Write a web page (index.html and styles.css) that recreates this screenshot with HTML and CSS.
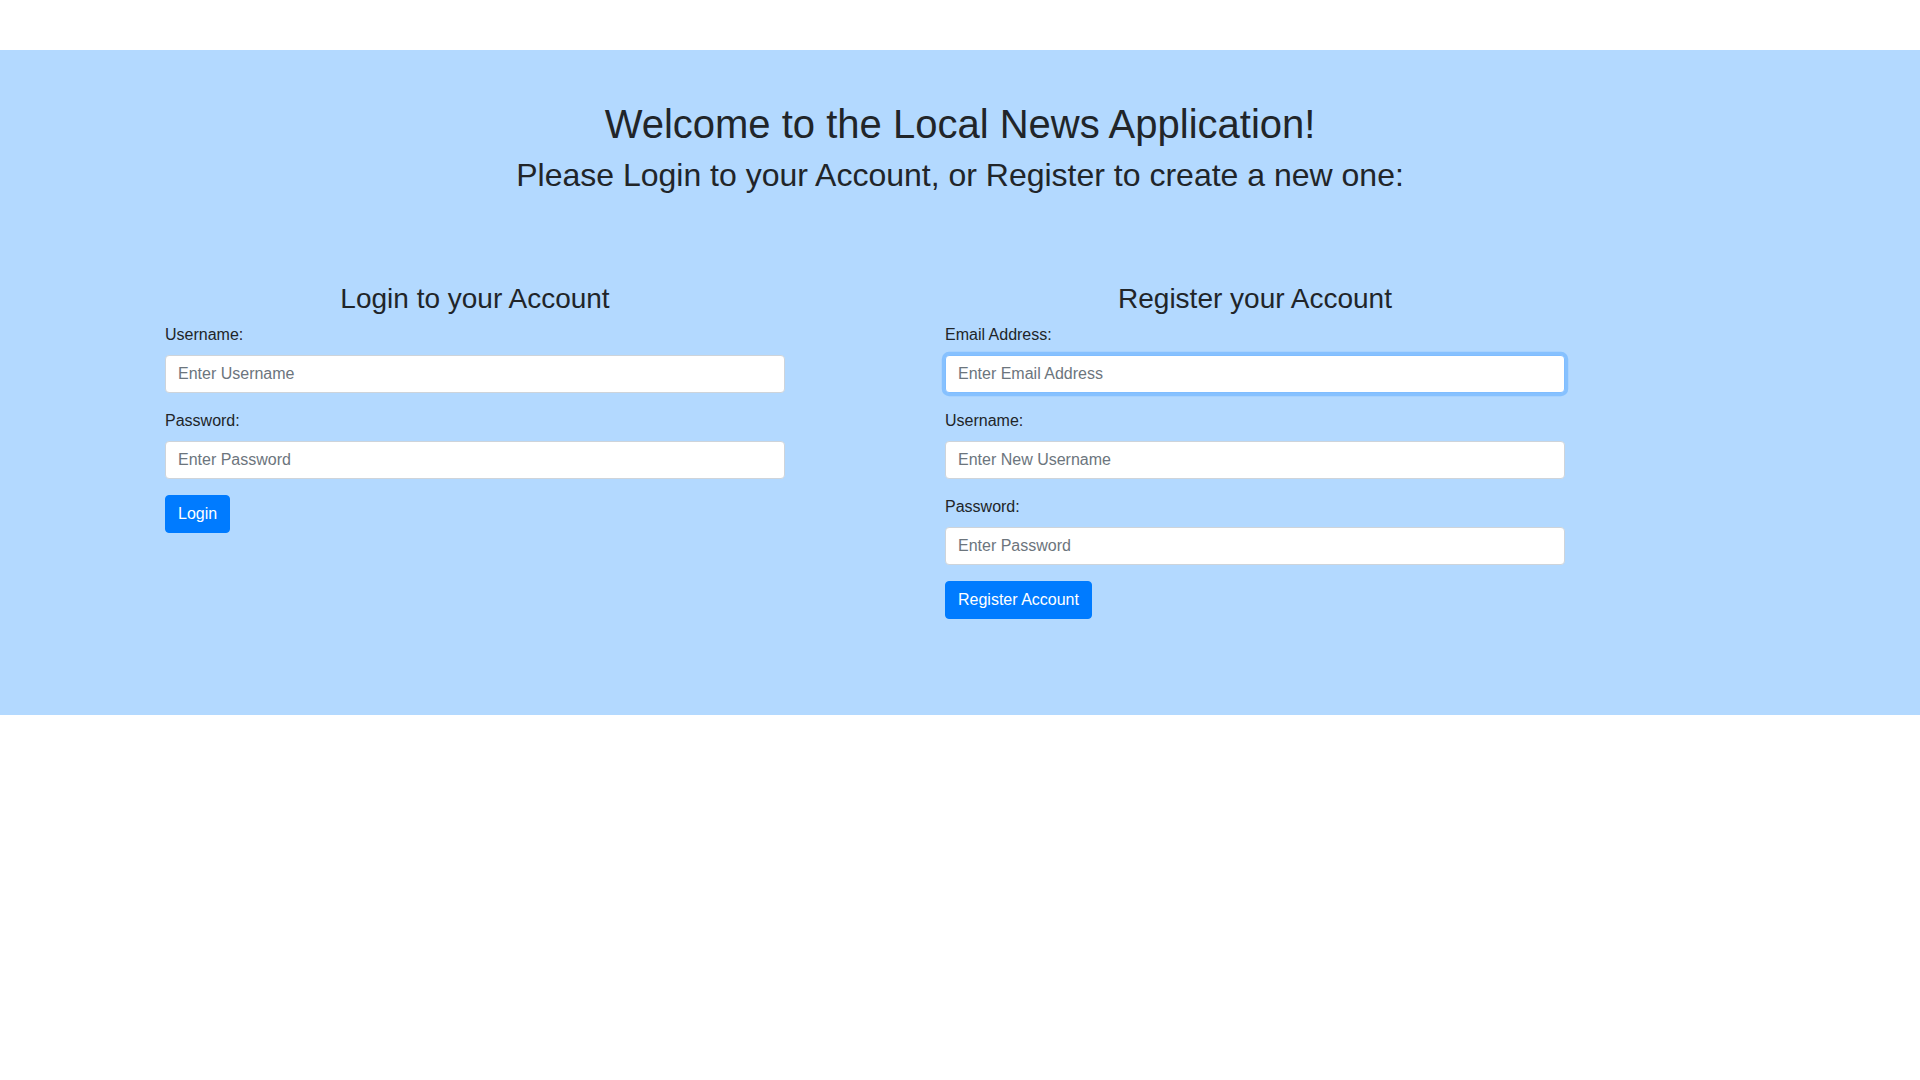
FILE: index.html
```html
<!DOCTYPE html>
<html lang="en">
<head>
<meta charset="utf-8">
<title>Local News Application</title>
<link rel="stylesheet" href="styles.css">
</head>
<body>
<header class="topbar"></header>
<section class="hero">
  <h1 class="hero-title">Welcome to the Local News Application!</h1>
  <h2 class="hero-sub">Please Login to your Account, or Register to create a new one:</h2>
  <div class="forms">
    <form class="panel">
      <h3 class="panel-title">Login to your Account</h3>
      <div class="field">
        <label class="label">Username:</label>
        <input class="input" type="text" placeholder="Enter Username">
      </div>
      <div class="field">
        <label class="label">Password:</label>
        <input class="input" type="password" placeholder="Enter Password">
      </div>
      <button class="btn" type="button">Login</button>
    </form>
    <form class="panel">
      <h3 class="panel-title">Register your Account</h3>
      <div class="field">
        <label class="label">Email Address:</label>
        <input class="input input-focus" type="email" placeholder="Enter Email Address" autofocus>
      </div>
      <div class="field">
        <label class="label">Username:</label>
        <input class="input" type="text" placeholder="Enter New Username">
      </div>
      <div class="field">
        <label class="label">Password:</label>
        <input class="input" type="password" placeholder="Enter Password">
      </div>
      <button class="btn" type="button">Register Account</button>
    </form>
  </div>
</section>
</body>
</html>
```
FILE: styles.css
```css
* { box-sizing: border-box; }
html, body { margin: 0; padding: 0; }
body {
  font-family: "Liberation Sans", Arial, sans-serif;
  font-size: 16px;
  line-height: 1.5;
  color: #212529;
  background: #fff;
}
.topbar { height: 50px; }
.hero {
  background: #b3d9ff;
  padding: 50px 0 96px;
}
.hero-title {
  margin: 0 0 8px;
  font-size: 40px;
  font-weight: 400;
  line-height: 1.2;
  text-align: center;
}
.hero-sub {
  margin: 0;
  font-size: 32px;
  font-weight: 400;
  line-height: 1.2;
  text-align: center;
}
.forms {
  display: flex;
  gap: 160px;
  padding-left: 165px;
  margin-top: 88px;
}
.panel {
  width: 620px;
  margin: 0;
}
.panel-title {
  margin: 0 0 7px;
  font-size: 28px;
  font-weight: 400;
  line-height: 1.2;
  text-align: center;
}
.field { margin-bottom: 16px; }
.label {
  display: inline-block;
  margin-bottom: 8px;
}
.input {
  display: block;
  width: 100%;
  height: 38px;
  padding: 6px 12px;
  font-family: inherit;
  font-size: 16px;
  line-height: 1.5;
  color: #495057;
  background: #fff;
  border: 1px solid #ced4da;
  border-radius: 4px;
  outline: none;
}
.input::placeholder { color: #6c757d; opacity: 1; }
.input-focus, .input:focus {
  border-color: #80bdff;
  box-shadow: 0 0 0 3.2px rgba(0, 123, 255, 0.25);
}
.btn {
  display: inline-block;
  height: 38px;
  padding: 6px 12px;
  font-family: inherit;
  font-size: 16px;
  line-height: 1.5;
  color: #fff;
  background: #007bff;
  border: 1px solid #007bff;
  border-radius: 4px;
  cursor: pointer;
}
```
